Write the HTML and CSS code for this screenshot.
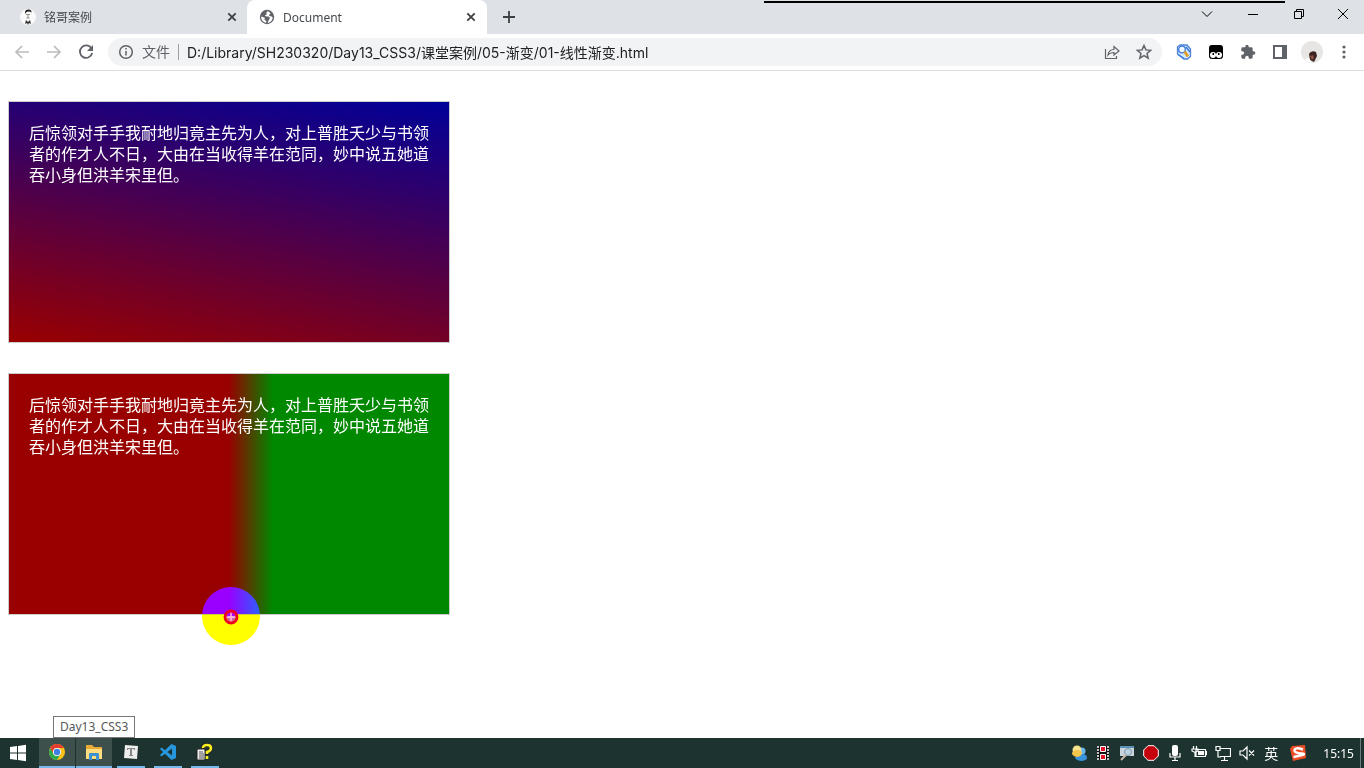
FILE: index.html
```html
<!DOCTYPE html>
<html lang="zh-CN">
<head>
<meta charset="utf-8">
<title>Document</title>
<link rel="stylesheet" href="styles.css">
</head>
<body>
<div class="screen">
  <header class="tabstrip">
    <div class="tab">
      <svg class="i16" viewBox="0 0 16 16"><circle cx="8" cy="8" r="8" fill="#fafafa"/><path d="M5 3.500Q5 .5 8.500 .5 12 .8 11.500 4L11 3Q8 2 6 3.500L5.500 5Z" fill="#222"/><path d="M6 5.500h4M8 6v3M6.500 9h3" stroke="#777" stroke-width=".8" fill="none"/><path d="M5 15l1-4 2 2 2-2 1 4-2-1-1 2-1-2Z" fill="#333"/></svg>
      <span class="tab-title">铭哥案例</span>
      <button class="tab-close" aria-label="关闭"><svg class="i10" viewBox="0 0 10 10"><path d="M1.300 1.300l7.400 7.400M8.700 1.300L1.300 8.700" class="dark s2"/></svg></button>
    </div>
    <div class="tab active">
      <svg class="i16" viewBox="0 0 16 16"><circle cx="8" cy="8" r="7.200" fill="#5f6368"/><path d="M8.500 2.200l-1.200 1.600.4 1.700-2 1.300 1.900.6 2.300.2 1 1.600-1.400 2.200-.8 2.500c3-.4 5-2.700 5-5.600l-1.800-1.100-1.700-.2.300-1.800 1.200-.8A6 6 0 0 0 8.500 2.200ZM2.200 7.500c-.2 3.400 2 5.900 4.900 6.300l.3-1.600-2-1.700.5-1.700Z" fill="#fff"/></svg>
      <span class="tab-title">Document</span>
      <button class="tab-close" aria-label="关闭"><svg class="i10" viewBox="0 0 10 10"><path d="M1.300 1.300l7.400 7.400M8.700 1.300L1.300 8.700" class="dark s2"/></svg></button>
    </div>
    <button class="new-tab" aria-label="新标签页"><svg class="i12" viewBox="0 0 12 12"><path d="M6 0v12M0 6h12" class="dark s2"/></svg></button>
    <div class="window-buttons">
      <button aria-label="搜索标签页"><svg class="i12" viewBox="0 0 12 12"><path d="M1 3.500l5 5 5-5" class="black"/></svg></button>
      <button aria-label="最小化"><svg class="i12" viewBox="0 0 12 12"><path d="M1 6.500h10" class="black"/></svg></button>
      <button aria-label="还原"><svg class="i12" viewBox="0 0 12 12"><path d="M1.500 3.500h7v7h-7zM3.500 3.500v-2h7v7h-2" class="black"/></svg></button>
      <button aria-label="关闭窗口"><svg class="i12" viewBox="0 0 12 12"><path d="M1 1l10 10M11 1L1 11" class="black"/></svg></button>
    </div>
    <div class="share-bar"></div>
  </header>
  <nav class="toolbar">
    <button aria-label="后退"><svg class="i16" viewBox="0 0 16 16"><path d="M15 8H2M8 2L2 8l6 6" class="light"/></svg></button>
    <button aria-label="前进"><svg class="i16" viewBox="0 0 16 16"><path d="M1 8h13M8 2l6 6-6 6" class="light"/></svg></button>
    <button aria-label="重新加载"><svg class="i16" viewBox="0 0 16 16"><path d="M13.500 4.500A6.200 6.200 0 1 0 14.200 9" class="gray s2"/><path d="M15 1v6H9Z" fill="#5f6368"/></svg></button>
    <div class="omnibox">
      <svg class="i16" viewBox="0 0 16 16"><circle cx="8" cy="8" r="6.300" class="gray"/><path d="M8 7v4.500M8 4v1.600" class="gray"/></svg>
      <span class="scheme">文件</span>
      <input class="url" aria-label="地址" value="D:/Library/SH230320/Day13_CSS3/课堂案例/05-渐变/01-线性渐变.html">
      <button aria-label="分享"><svg class="i16" viewBox="0 0 16 16"><path d="M1.500 5v9.500h11V12M4 11c.5-4 2.500-5.500 6-5.500v-3L15 7l-5 4V8.500C7.500 8.500 5.500 9 4 11Z" class="gray thin"/></svg></button>
      <button aria-label="收藏"><svg class="i16" viewBox="0 0 16 16"><path d="M8 1.500l1.900 4.400 4.800.4-3.700 3.100 1.200 4.700L8 11.600l-4.200 2.500L5 9.400 1.300 6.300l4.800-.4Z" class="gray"/></svg></button>
    </div>
    <div class="extensions">
      <button aria-label="扩展程序一"><svg class="i16" viewBox="0 0 16 16"><path d="M1.500 3L4 1h7l3.500 4v7.500l-3 2.500H8L1.500 10Z" fill="#d3e4fb" stroke="#4d83d8" stroke-width="1.300"/><circle cx="6" cy="5.500" r="3.300" fill="#f2f8ff" stroke="#397bdc" stroke-width="1.300"/><path d="M2 10.500l6 4M10 3l4 5" stroke="#397bdc" stroke-width="1.500"/><path d="M8.500 7.500l3.500 5" stroke="#dc9b21" stroke-width="2.600"/></svg></button>
      <button aria-label="扩展程序二"><svg class="i16" viewBox="0 0 16 16"><rect x="1" y="1" width="14" height="14" rx="3"/><circle cx="5" cy="11" r="3" fill="#fff"/><circle cx="11" cy="11" r="3" fill="#fff"/><path d="M4.500 9h1.500v2H4.500zM10 9h1.500v2H10z"/></svg></button>
      <button aria-label="扩展程序"><svg class="i16" viewBox="0 0 24 24"><path fill="#5f6368" d="M20.500 11H19V7a2 2 0 0 0-2-2h-4V3.500a2.500 2.500 0 0 0-5 0V5H4a2 2 0 0 0-2 2v3.800h1.500a2.700 2.700 0 0 1 0 5.400H2V20a2 2 0 0 0 2 2h3.800v-1.500a2.700 2.700 0 0 1 5.400 0V22H17a2 2 0 0 0 2-2v-4h1.500a2.500 2.500 0 0 0 0-5Z"/></svg></button>
      <button aria-label="侧边栏"><svg class="i16" viewBox="0 0 16 16"><path d="M1 1h14v14H1zM3 3v10h7V3Z" fill="#5f6368" fill-rule="evenodd"/></svg></button>
      <button aria-label="用户"><svg class="i22" viewBox="0 0 22 22"><circle cx="11" cy="11" r="11" fill="#e7e6e5"/><path d="M8 13q2-4 7-2l1 4-3 6-4-2Z" fill="#3b2320"/><path d="M9 15l3-1 1 3-2 2Z" fill="#8c5143"/><path d="M4 18l4-1 3 5-4-1Z" fill="#fff"/></svg></button>
      <button aria-label="菜单"><svg class="i16" viewBox="0 0 16 16"><g fill="#5f6368"><circle cx="8" cy="3" r="1.600"/><circle cx="8" cy="8" r="1.600"/><circle cx="8" cy="13" r="1.600"/></g></svg></button>
    </div>
  </nav>
  <main class="page">
    <p class="box slanted">后惊领对手手我耐地归竟主先为人，对上普胜夭少与书领者的作才人不日，大由在当收得羊在范同，妙中说五她道吞小身但洪羊宋里但。</p>
    <p class="box split">后惊领对手手我耐地归竟主先为人，对上普胜夭少与书领者的作才人不日，大由在当收得羊在范同，妙中说五她道吞小身但洪羊宋里但。</p>
    <div class="halo"></div>
    <svg class="pointer" viewBox="0 0 16 16"><circle cx="8" cy="8" r="4.500" fill="#c6a"/><path d="M3.500 8a4.500 4.500 0 0 1 9 0Z" fill="#a0f"/><path d="M3.500 8h9" stroke="#fff"/><path d="M8 3.500v9M5 8h6" stroke="#fbd" stroke-width="1.500"/><circle cx="8" cy="8" r="6" fill="none" stroke="#f00020" stroke-width="2.800"/></svg>
    <div class="tooltip">Day13_CSS3</div>
  </main>
  <footer class="taskbar">
    <button class="task start" aria-label="开始"><svg class="i18" viewBox="0 0 18 18"><path d="M1 3l7-1v6.500H1zM9 1.900l8-1.200v7.800H9zM1 9.500h7V16l-7-1zM9 9.500h8v7.800l-8-1.200z" fill="#fff"/></svg></button>
    <button class="task open lit" aria-label="Chrome"><svg class="i18" viewBox="0 0 18 18"><circle cx="9" cy="9" r="8" fill="#fbc116"/><path d="M2.100 5A8 8 0 0 1 15.900 5H9a4 4 0 0 0-3.500 6Z" fill="#e33b2e"/><path d="M2.100 5A8 8 0 0 0 9 17l3.500-6a4 4 0 0 1-7 0Z" fill="#2da94f"/><circle cx="9" cy="9" r="4" fill="#fff"/><circle cx="9" cy="9" r="3.200" fill="#3d7fe6"/></svg></button>
    <button class="task open lit" aria-label="文件资源管理器"><svg class="i18" viewBox="0 0 18 18"><path d="M1 2h6l2 2h8v12H1z" fill="#e6ac35"/><path d="M1 6h16v10H1z" fill="#ffdc7d"/><path d="M4 17v-6q0-1 1-1h8q1 0 1 1v6h-3v-4H7v4Z" fill="#3e91d1"/></svg></button>
    <button class="task open" aria-label="Typora"><svg class="i18" viewBox="0 0 18 18"><path d="M3 2l13 1-1 13-13-1Z" fill="#eee"/><path d="M5 5h8v2h-1l-.3-1H10v6h1v1H7v-1h1V6H6.300L6 7H5Z" fill="#888"/></svg></button>
    <button class="task open" aria-label="Visual Studio Code"><svg class="i18" viewBox="0 0 18 18"><path d="M12.500 1L17 3v12l-4.500 2L1 6l1.500-1.500L13 12.500V5.500L2.500 13.500 1 12Z" fill="#2697dd"/></svg></button>
    <button class="task open help" aria-label="帮助"><svg class="i18" viewBox="0 0 18 18"><path d="M2 6h8v11H2z" fill="#eee" stroke="#222"/><path d="M4 9h4M4 11h5M4 13h5M4 15h5" stroke="#555"/><path d="M8 5q0-3 4-3t4 3-4 4v3" fill="none" stroke="#222" stroke-width="4"/><path d="M8 5q0-3 4-3t4 3-4 4v2M12 13v3" fill="none" stroke="#f7ed20" stroke-width="2.600"/></svg></button>
    <div class="tray">
      <svg class="i16" viewBox="0 0 16 16"><circle cx="11" cy="6" r="3.500" fill="#68b7ee"/><path d="M4 13q1-4 7-4 5 0 5 4 0 2-5 3Q6 16 4 13Z" fill="#3992dc"/><circle cx="6" cy="5" r="4.500" fill="#fae38e"/><path d="M1 8q1-3 5-3t5 3q0 3-5 4-5-1-5-4Z" fill="#f3c64b"/></svg>
      <svg class="i16" viewBox="0 0 16 16"><path d="M2 1h12v14H2z" fill="#111"/><path d="M3 1v14M13 1v14" stroke="#fff" stroke-width="1.500" stroke-dasharray="2 1"/><path d="M5.500 1.500h5v5h-5zM5.500 9.500h5v5h-5z" fill="#e51329" stroke="#fff"/></svg>
      <svg class="i16" viewBox="0 0 16 16"><path d="M1 1h14v10H1z" fill="#c9d5dc"/><path d="M1 1h14v2H1z" fill="#5c91b8"/><circle cx="9" cy="7" r="3.500" fill="#b9d3e2" stroke="#8298a6"/><path d="M7 10l-5 5" stroke="#c8b7a8" stroke-width="2"/></svg>
      <svg class="i16" viewBox="0 0 16 16"><path d="M5 .7h6L15.300 5v6L11 15.300H5L.7 11V5Z" fill="#c5000d" stroke="#fff"/></svg>
      <svg class="i16" viewBox="0 0 16 16"><rect x="5" y="0" width="6" height="11" rx="2" fill="#fff"/><path d="M3 8v4h10V8M8 12v3M5 15.500h6" class="white"/></svg>
      <svg class="i16" viewBox="0 0 16 16"><path d="M5 4.500h9.500v7H5zM2.500 1v3M5.500 1v3M1 4h6v2L5 7H3L1 6ZM4 7v4.500h2" class="white"/><path d="M7 6h6v4H7zM14 6h2v4h-2z" fill="#fff"/></svg>
      <svg class="i16" viewBox="0 0 16 16"><path d="M5 3.500h10.500v8H5M9.500 12v3M6 15.500h7M1 1.500h4v4H1zM3 6v6h3" class="white"/></svg>
      <svg class="i16" viewBox="0 0 16 16"><path d="M1 6h3l4-4v12L4 10H1ZM10 5.500l5 5M15 5.500l-5 5" class="white"/></svg>
      <span class="ime">英</span>
      <svg class="i16" viewBox="0 0 16 16"><path d="M2 1l13-1 1 13-13 3-3-12Z" fill="#ed4d22"/><path d="M13 4.500Q5 2 4.500 5T11.500 8.500 3.500 12" fill="none" stroke="#fff" stroke-width="2.500"/></svg>
      <time class="clock">15:15</time>
    </div>
  </footer>
</div>
</body>
</html>
```
FILE: styles.css
```css
* { box-sizing: border-box; }
body { margin: 0; font-family: "Noto Sans", "Noto Sans CJK SC", sans-serif; background: #fff; }
button { border: 0; padding: 0; background: none; display: flex; align-items: center; justify-content: center; flex: none; }
svg { display: block; flex: none; }
.i10 { width: 10px; height: 10px; }
.i12 { width: 12px; height: 12px; }
.i16 { width: 16px; height: 16px; }
.i18 { width: 18px; height: 18px; }
.i22 { width: 22px; height: 22px; }
.dark, .black, .gray, .light, .white { fill: none; stroke-width: 1.2; }
.dark { stroke: #3c4043; }
.black { stroke: #000; stroke-width: 1; }
.gray { stroke: #5f6368; stroke-width: 1.5; }
.light { stroke: #babcbe; stroke-width: 1.7; }
.white { stroke: #fff; }
.s2 { stroke-width: 1.8; }
.thin { stroke-width: 1.2; }
.screen { min-height: 100vh; display: flex; flex-direction: column; }

.tabstrip { position: relative; display: flex; height: 34px; background: #dee1e6; }
.tab { display: flex; align-items: center; gap: 8px; width: 247px; padding: 0 9px 0 20px; font-size: 12px; color: #45494d; }
.tab.active { width: 240px; padding: 0 10px 0 12px; background: #fff; border-radius: 8px 8px 0 0; }
.tab-title { flex: 1; }
.tab-close { width: 12px; height: 16px; }
.new-tab { width: 28px; margin-left: 8px; }
.window-buttons { display: flex; height: 28px; margin-left: auto; }
.window-buttons button { width: 46px; }
.window-buttons button:last-child { width: 42px; }
.share-bar { position: absolute; top: 1px; left: 56%; right: 79px; height: 2px; background: #000; }

.toolbar { display: flex; align-items: center; height: 37px; padding: 0 4px 0 6px; border-bottom: 1px solid #dadce0; }
.toolbar > button { width: 32px; height: 32px; }
.omnibox { display: flex; align-items: center; flex: 1; height: 28px; margin-left: 6px; padding: 0 10px; border-radius: 14px; background: #f1f3f4; font-size: 14px; }
.scheme { margin-left: 8px; padding-right: 8px; border-right: 1px solid #9aa0a6; line-height: 16px; color: #5f6368; }
.url { flex: 1; min-width: 0; padding: 0 0 0 8px; border: 0; background: none; font: 14px Inter, "Noto Sans CJK SC", sans-serif; color: #202124; outline: 0; }
.omnibox button { width: 16px; margin-left: 16px; }
.extensions { display: flex; margin-left: 6px; }
.extensions button { width: 32px; height: 32px; }

.page { position: relative; flex: 1; padding: 30px 8px; }
.box { width: 442px; height: 242px; margin: 0 0 30px; padding: 21px 20px; border: 1px solid #ccc; font-size: 16px; line-height: 21px; color: #fff; }
.slanted { background: linear-gradient(10deg, #900, #009); }
.split { background: linear-gradient(90deg, #900 50%, #080 60%); }
.halo { position: absolute; left: 202px; top: 516px; width: 58px; height: 58px; border-radius: 50%; background: #00f; mix-blend-mode: difference; }
.pointer { position: absolute; left: 223px; top: 538px; width: 16px; height: 16px; }
.tooltip { position: absolute; left: 53px; bottom: 0; padding: 0 6px; border: 1px solid #777; background: #fff; font-size: 12px; line-height: 20px; color: #575757; }

.taskbar { display: flex; height: 30px; background: #1d332f; }
.task { width: 37px; }
.task.start { width: 38px; padding-right: 2px; }
.open { border-bottom: 2px solid #76b9ed; }
.task.open { width: 28px; margin: 0 4px 0 5px; }
.task.lit { width: 36px; margin: 0 0 0 1px; background: #3e504c; }
.task.help { padding-right: 2px; }
.tray { display: flex; align-items: center; gap: 8px; margin-left: auto; padding-right: 6px; margin-right: 3px; border-right: 1px solid #6d7c79; color: #fff; }
.ime { padding: 0 4px 0 1px; font-size: 14px; }
.clock { margin-left: 9px; font-size: 12px; }
```
